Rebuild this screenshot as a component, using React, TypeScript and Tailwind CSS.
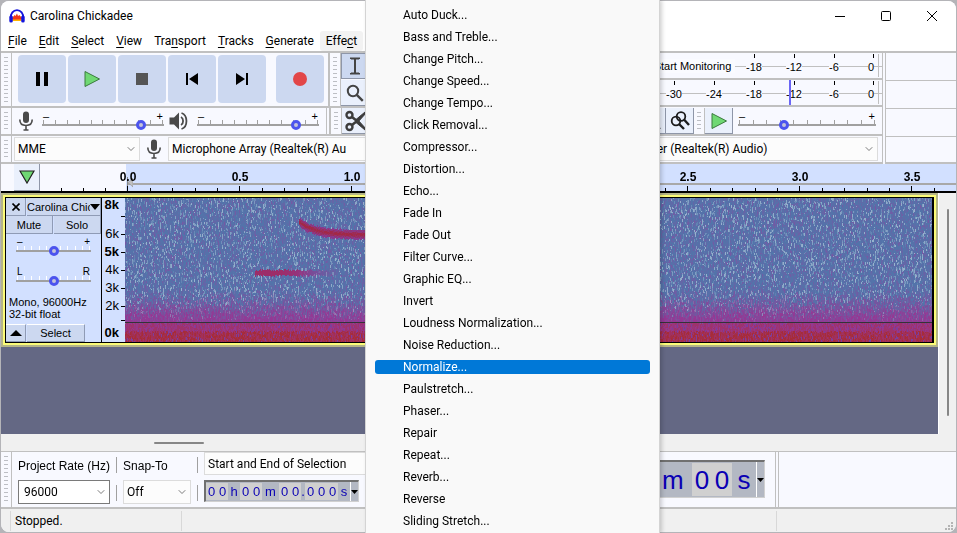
import { useEffect, useRef, useState } from "react";
import type { ReactNode } from "react";
import clsx from "clsx";
import { ChevronDown } from "lucide-react";

const MENUS = [
  { label: "File", key: 0 },
  { label: "Edit", key: 0 },
  { label: "Select", key: 0 },
  { label: "View", key: 0 },
  { label: "Transport", key: 3 },
  { label: "Tracks", key: 0 },
  { label: "Generate", key: 0 },
  { label: "Effect", key: 4 },
];

const EFFECTS = [
  "Auto Duck...",
  "Bass and Treble...",
  "Change Pitch...",
  "Change Speed...",
  "Change Tempo...",
  "Click Removal...",
  "Compressor...",
  "Distortion...",
  "Echo...",
  "Fade In",
  "Fade Out",
  "Filter Curve...",
  "Graphic EQ...",
  "Invert",
  "Loudness Normalization...",
  "Noise Reduction...",
  "Normalize...",
  "Paulstretch...",
  "Phaser...",
  "Repair",
  "Repeat...",
  "Reverb...",
  "Reverse",
  "Sliding Stretch...",
];

const SECONDS = ["0.0", "0.5", "1.0", "1.5", "2.0", "2.5", "3.0", "3.5"];

function MicIcon() {
  return (
    <svg className="h-5 w-4 shrink-0" viewBox="0 0 16 20" fill="none" stroke="#4a4a4a" strokeWidth="1.6">
      <rect x="5" y="0.5" width="6" height="11.5" rx="3" fill="#4a4a4a" stroke="none" />
      <path d="M1.8 8.5c0 3.8 2.6 6 6.2 6s6.200-2.200 6.200-6M8 14.500V19M5.500 19h5" />
    </svg>
  );
}

function SpeakerIcon() {
  return (
    <svg className="h-5 w-5 shrink-0" viewBox="0 0 20 20" fill="none" stroke="#4a4a4a" strokeWidth="1.800">
      <path d="M0.500 6.500h4.500l5-5v17l-5-5H0.500z" fill="#4a4a4a" stroke="none" />
      <path d="M12 6c2.800 1.600 2.800 6.400 0 8M12.500 2c6.600 2.200 6.600 13.800 0 16" />
    </svg>
  );
}

function PlayIcon({ className }: { className?: string }) {
  return (
    <svg className={className} viewBox="0 0 18 18">
      <path d="M2 1.500L16.500 9 2 16.500z" fill="#6fd873" stroke="#3a7a3d" strokeWidth="1" />
    </svg>
  );
}

function Grabber() {
  return (
    <div className="flex w-[11px] shrink-0 justify-center border-r border-[#c0c0c0] py-1">
      <div className="w-1 bg-[repeating-linear-gradient(#bcbec4_0_1px,transparent_1px_4px)]" />
    </div>
  );
}

interface SliderProps {
  label: string;
  value: number;
  ticks?: number;
  marks?: [string, string];
  className?: string;
  small?: boolean;
}

function Slider({ label, value, ticks = 11, marks = ["–", "+"], className, small }: SliderProps) {
  const [level, setLevel] = useState(value);
  return (
    <div className={clsx("flex shrink-0 flex-col", className)}>
      <div className={clsx("flex justify-between px-px font-['Liberation_Sans'] leading-[8px] text-black", small ? "text-[10px]" : "text-[11px]")}>
        <span>{marks[0]}</span>
        <span>{marks[1]}</span>
      </div>
      <div className="relative">
        <div className="absolute inset-x-px top-0 flex h-1 justify-between">
          {Array.from({ length: ticks }, (_, i) => (
            <span key={i} className={clsx("w-px", small ? "bg-white" : "bg-[#a0a0a0]")} />
          ))}
        </div>
        <input
          type="range"
          aria-label={label}
          value={level}
          onChange={(e) => setLevel(Number(e.target.value))}
          className="relative block h-[10px] w-full appearance-none bg-transparent bg-[linear-gradient(#a0a0a0,#a0a0a0)] bg-[length:100%_2px] bg-[position:0_4px] bg-no-repeat [&::-webkit-slider-thumb]:h-[10px] [&::-webkit-slider-thumb]:w-[10px] [&::-webkit-slider-thumb]:appearance-none [&::-webkit-slider-thumb]:rounded-full [&::-webkit-slider-thumb]:border-[3px] [&::-webkit-slider-thumb]:border-[#4c54ee] [&::-webkit-slider-thumb]:bg-[#c4c4d8]"
        />
      </div>
    </div>
  );
}

interface PickerProps {
  label: string;
  value: string;
  className?: string;
}

function Picker({ label, value, className }: PickerProps) {
  return (
    <div className={clsx("relative shrink-0", className)}>
      <select
        aria-label={label}
        className="h-full w-full appearance-none border border-[#dcdcdc] bg-[#fcfcfc] pr-5 pl-[3px] text-black"
      >
        <option>{value}</option>
      </select>
      <ChevronDown className="pointer-events-none absolute top-1/2 right-[3px] h-3 w-3 -translate-y-1/2 text-[#505050]" strokeWidth={1.5} />
    </div>
  );
}

function ToolButton({ label, active, children }: { label: string; active?: boolean; children: ReactNode }) {
  return (
    <button
      aria-label={label}
      className={clsx(
        "flex h-[26px] w-7 shrink-0 items-center justify-center border-r border-b border-[#8e96a8]",
        active ? "border-t border-l bg-[#ccd8f0]" : "bg-[#eaf0fc]"
      )}
    >
      {children}
    </button>
  );
}

function TransportButton({ label, children }: { label: string; children: ReactNode }) {
  return (
    <button aria-label={label} className="flex h-12 w-12 items-center justify-center rounded-[4px] bg-[#ccd8f0]">
      {children}
    </button>
  );
}

function Meter({ note, level }: { note?: string; level?: boolean }) {
  const marks = note ? ["-18", "-12", "-6"] : ["-30", "-24", "-18", "-12", "-6"];
  return (
    <div className="relative flex h-[27px] border-b-2 border-[#c0c0c0] font-['Liberation_Sans'] text-[11px] leading-[14px] text-black">
      <div className="absolute inset-x-0 top-[13px] h-px bg-[#c0c0c0]" />
      <div className="flex flex-1 justify-end">
        {note && (
          <div className="relative flex w-[83px] items-end justify-center pb-[5px]">
            <span className="bg-[#fafbff] px-1 whitespace-nowrap">{note}</span>
          </div>
        )}
        {marks.map((m) => (
          <div key={m} className="relative flex w-10 flex-col items-center gap-[2px] pt-px">
            <span className="h-1 w-px bg-black" />
            <span className="bg-[#f8f9ff]">{m}</span>
          </div>
        ))}
        <div className="relative flex w-5 flex-col items-end gap-[2px] pt-px">
          <span className="h-1 w-px bg-black" />
          <span className="bg-[#f8f9ff]">0</span>
        </div>
      </div>
      <div className="relative my-px ml-1 w-1 border-l border-[#c0c0c0]" />
      {level && <div className="absolute inset-y-0 right-[91px] w-[2px] bg-[#6b66f5]" />}
    </div>
  );
}

// small repeatable generator so the noise looks the same on every paint
function makeRandom(seed: number) {
  let s = seed;
  return () => {
    s = (s * 1664525 + 1013904223) >>> 0;
    return s / 4294967296;
  };
}

function mix(a: number[], b: number[], t: number) {
  const k = Math.max(0, Math.min(1, t));
  return a.map((v, i) => v + (b[i] - v) * k);
}

function Spectrogram() {
  const ref = useRef<HTMLCanvasElement>(null);

  useEffect(() => {
    const canvas = ref.current;
    const ctx = canvas?.getContext("2d");
    if (!canvas || !ctx) return;
    const w = canvas.clientWidth;
    const h = canvas.clientHeight;
    canvas.width = w;
    canvas.height = h;
    const random = makeRandom(7);
    const blue = [82, 116, 170];
    const pale = [165, 190, 212];
    const violet = [118, 88, 164];
    const purple = [148, 56, 148];
    const magenta = [158, 50, 108];
    const red = [166, 44, 56];

    for (let x = 0; x < w; x++) {
      let y = 0;
      while (y < h) {
        const len = 1 + Math.floor(random() * 3);
        const f = y / h;
        const n = random();
        let c = mix(blue, violet, random() * random() * 0.8);
        if (n > 0.76) c = mix(blue, pale, random() * 0.85);
        else if (n < 0.1) c = mix(blue, violet, 0.4 + random() * 0.6);
        if (f > 0.62) c = mix(c, purple, (f - 0.67) * 5.2 + (random() - 0.5) * 0.7);
        if (f > 0.86) c = mix(purple, magenta, random() * 1.4);
        if (f > 0.92) c = mix(magenta, red, random() * 1.2);
        if (f > 0.86 && n > 0.93) c = [124, 62, 156];

        // the falling note fades in from violet, the flat one trails off
        const fall = 24 + 13 * (1 - Math.exp(-(x - 174) / 16));
        if (x > 173 && x < 262) {
          const d = Math.abs(y + len / 2 - fall);
          if (d < 4.5) c = mix([162, 40, 70], [136, 58, 144], d / 3.5 - 0.15);
        }
        if (x > 129 && x < 212) {
          const d = Math.abs(y + len / 2 - 75);
          const fade = x < 155 ? 1 : 1 - (x - 155) / 58;
          if (d < 2.8) c = mix(c, mix([140, 56, 146], [158, 44, 100], fade * 1.4 - 0.5), fade * 1.4);
        }
        ctx.fillStyle = `rgb(${c.map(Math.round).join(",")})`;
        ctx.fillRect(x, y, 1, len);
        y += len;
      }
    }
    ctx.fillStyle = "#333338";
    ctx.fillRect(0, Math.round(h * 0.863), w, 1);
  }, []);

  return <canvas ref={ref} className="block h-full w-full" />;
}

const SCALE = [
  { label: "8k", bold: true, tick: false, size: "h-[14px]" },
  { label: "", bold: false, tick: true, size: "h-2 mb-[5px]" },
  { label: "6k", bold: false, tick: true, size: "h-[18px]" },
  { label: "5k", bold: true, tick: true, size: "h-[18px]" },
  { label: "4k", bold: false, tick: true, size: "h-[18px]" },
  { label: "3k", bold: false, tick: true, size: "h-[18px]" },
  { label: "2k", bold: false, tick: true, size: "h-[18px]" },
  { label: "", bold: false, tick: true, size: "h-[11px]" },
  { label: "0k", bold: true, tick: false, size: "h-[14px]" },
];

const TRACK_BUTTON = "flex items-center justify-center bg-[#ccd8f0] border-r border-b border-[#8f9bb5]";

function Track() {
  return (
    <div className="border-2 border-[#b4b488]">
      <div className="border-2 border-[#fbfb78]">
        <div className="flex h-[146px] border border-black border-r-2 bg-black font-['Liberation_Sans'] text-[11px] text-black">
          <div className="flex w-24 shrink-0 flex-col border-r border-black bg-[#d2e0ff]">
            <div className="flex h-[18px] gap-px">
              <button aria-label="Close track" className={clsx(TRACK_BUTTON, "w-5")}>
                <svg className="h-2 w-2" viewBox="0 0 8 8" stroke="#000" strokeWidth="1.600">
                  <path d="M0.500 0.500l7 7M7.500 0.500l-7 7" />
                </svg>
              </button>
              <button className={clsx(TRACK_BUTTON, "min-w-0 flex-1")}>
                <span className="overflow-hidden whitespace-nowrap">Carolina Chic</span>
                <svg className="h-[6px] w-[10px] shrink-0" viewBox="0 0 10 6">
                  <path d="M0 0h10L5 6z" />
                </svg>
              </button>
            </div>
            <div className="flex h-[18px] gap-px">
              <button className={clsx(TRACK_BUTTON, "flex-1")}>Mute</button>
              <button className={clsx(TRACK_BUTTON, "flex-1")}>Solo</button>
            </div>
            <Slider label="Gain" value={50} small className="mx-[10px] mt-1" />
            <Slider label="Pan" value={50} small marks={["L", "R"]} className="mx-[10px] mt-3" />
            <div className="mt-[10px] pl-[3px] leading-3 whitespace-nowrap">
              Mono, 96000Hz
              <br />
              32-bit float
            </div>
            <div className="mt-auto flex h-[18px] gap-px">
              <button aria-label="Collapse" className={clsx(TRACK_BUTTON, "w-5 border-t border-t-white")}>
                <svg className="h-[6px] w-3" viewBox="0 0 12 6">
                  <path d="M0 6h12L6 0z" />
                </svg>
              </button>
              <button className={clsx(TRACK_BUTTON, "w-[58px] border-t border-t-white")}>Select</button>
            </div>
          </div>
          <div className="flex w-[23px] shrink-0 flex-col bg-[#d2e0ff] text-[13px]">
            {SCALE.map((s, i) => (
              <div key={i} className={clsx("flex items-center justify-end gap-[2px]", s.size)}>
                <span className={clsx(s.bold && "font-bold")}>{s.label}</span>
                <span className={clsx("h-px w-1", s.tick && "bg-black")} />
              </div>
            ))}
          </div>
          <div className="min-w-0 flex-1">
            <Spectrogram />
          </div>
        </div>
      </div>
    </div>
  );
}

function TimeText({ parts, big }: { parts: string[]; big?: boolean }) {
  const unitClass = (part: string) => {
    if (part === ".") return "w-1 justify-center";
    if (big) return part === "s" ? "w-6 justify-center" : "w-[34px] pl-1";
    return part === "m" ? "w-[17px] justify-center" : "w-3 justify-center";
  };
  return (
    <div
      className={clsx(
        "flex shrink-0 border border-t-2 border-[#d0d0d0] border-t-[#707070] bg-[#b3b8c3] font-['Liberation_Sans'] text-[#0a00b4]",
        big ? "h-[38px] text-[26px]" : "h-[22px] border-l-2 border-l-[#707070] text-[13px]"
      )}
    >
      {parts.map((part, i) =>
        /\d/.test(part) ? (
          <span key={i} className="my-px flex items-center bg-[#d0d0d0]">
            {part.split("").map((d, k) => (
              <span key={k} className={clsx("text-center", big ? "w-5" : "w-[11px]")}>
                {d}
              </span>
            ))}
          </span>
        ) : (
          <span key={i} className={clsx("flex items-center", unitClass(part))}>
            {part}
          </span>
        )
      )}
      <button aria-label="Time format" className="flex w-2 items-center border-l border-white">
        <svg className="h-1 w-[7px]" viewBox="0 0 7 4">
          <path d="M0 0h7L3.500 4z" />
        </svg>
      </button>
    </div>
  );
}

function EffectMenu() {
  return (
    <div
      role="menu"
      className="absolute inset-y-0 left-[365px] w-[295px] border-x border-[#d4d4d4] bg-[#f9f9f9] px-[9px] pt-1 shadow-[2px_0_4px_rgba(0,0,0,0.18)]"
    >
      {EFFECTS.map((name) => (
        <div key={name} className="flex h-[22px] items-center">
          <button
            role="menuitem"
            className={clsx(
              "h-[14px] w-full rounded-[3px] pl-7 text-left leading-[14px]",
              name === "Normalize..." ? "bg-[#0078d7] text-white" : "text-black"
            )}
          >
            {name}
          </button>
        </div>
      ))}
    </div>
  );
}

export default function App() {
  return (
    <div className="relative flex h-screen flex-col overflow-hidden bg-[#b4b4b8] p-px font-['Roboto','Open_Sans',sans-serif] text-[12px] leading-4 text-black">
      <div className="flex min-h-0 flex-1 flex-col overflow-hidden rounded-[8px] bg-[#f8f9ff]">
        {/* Title bar */}
        <div className="flex h-[30px] shrink-0 items-center bg-white pl-2">
          <svg className="h-[14px] w-4" viewBox="0 0 16 14">
            <path d="M3.500 7.500h9V12h-9z" fill="#ffb400" />
            <path d="M3 9.500l1.500-2 1-1.500 1 1L8 4.500l1 2.500 1.500-1 1 1.500L13 9.500l-1.500 1h-7z" fill="#f0381c" />
            <path d="M1.800 9C1.500 4.500 4.200 1.200 8 1.200S14.500 4.500 14.200 9" fill="none" stroke="#1414dc" strokeWidth="1.800" />
            <rect x="0.300" y="6.500" width="3.500" height="7" rx="1.500" fill="#1414dc" />
            <rect x="12.200" y="6.500" width="3.500" height="7" rx="1.500" fill="#1414dc" />
          </svg>
          <h1 className="flex-1 pl-[5px]">Carolina Chickadee</h1>
          <div className="flex gap-[34px] pr-[18px]">
            <button aria-label="Minimize">
              <svg className="h-3 w-3" viewBox="0 0 12 12" stroke="#000">
                <path d="M1 6.500h10" />
              </svg>
            </button>
            <button aria-label="Maximize">
              <svg className="h-3 w-3" viewBox="0 0 12 12" fill="none" stroke="#000">
                <rect x="1.500" y="1.500" width="9" height="9" rx="1" />
              </svg>
            </button>
            <button aria-label="Close">
              <svg className="h-3 w-3" viewBox="0 0 12 12" stroke="#000">
                <path d="M1 1l10 10M11 1L1 11" />
              </svg>
            </button>
          </div>
        </div>

        {/* Menu bar */}
        <div className="flex h-[22px] shrink-0 border-b-2 border-[#c0c0c0] bg-white pl-px">
          {MENUS.map(({ label, key }) => (
            <button key={label} className={clsx("px-[6px]", label === "Effect" && "rounded-[3px] bg-[#f2f2f2]")}>
              {label.slice(0, key)}
              <span className="underline underline-offset-2">{label[key]}</span>
              {label.slice(key + 1)}
            </button>
          ))}
        </div>

        {/* Toolbars */}
        <div className="flex shrink-0">
          <div className="min-w-0 flex-1">
            <div className="flex h-[55px]">
              <div className="flex shrink-0 border-b-2 border-[#c0c0c0]">
                <Grabber />
                <div className="flex gap-[2px] border-r-2 border-[#c0c0c0] py-[2px] pr-1 pl-[6px]">
                  <TransportButton label="Pause">
                    <svg className="h-4 w-4" viewBox="0 0 16 16">
                      <path d="M2 1h4v14H2zM10 1h4v14h-4z" />
                    </svg>
                  </TransportButton>
                  <TransportButton label="Play">
                    <PlayIcon className="h-[18px] w-[18px]" />
                  </TransportButton>
                  <TransportButton label="Stop">
                    <span className="h-3 w-3 bg-[#555]" />
                  </TransportButton>
                  <TransportButton label="Skip to Start">
                    <svg className="h-[14px] w-[14px]" viewBox="0 0 14 14">
                      <path d="M1 1h2v12H1zM13 1v12L4 7z" />
                    </svg>
                  </TransportButton>
                  <TransportButton label="Skip to End">
                    <svg className="h-[14px] w-[14px]" viewBox="0 0 14 14">
                      <path d="M11 1h2v12h-2zM1 1v12l9-6z" />
                    </svg>
                  </TransportButton>
                  <div className="ml-2">
                    <TransportButton label="Record">
                      <span className="h-[14px] w-[14px] rounded-full bg-[#e24648]" />
                    </TransportButton>
                  </div>
                </div>
                <Grabber />
                <div className="flex w-7 flex-col gap-px">
                  <ToolButton label="Selection Tool" active>
                    <svg className="h-[18px] w-3" viewBox="0 0 12 18" fill="none" stroke="#444" strokeWidth="2">
                      <path d="M2 2V1.500h8V2M2 16v0.500h8V16M6 1.500v15" />
                    </svg>
                  </ToolButton>
                  <ToolButton label="Zoom Tool">
                    <svg className="h-[18px] w-[18px]" viewBox="0 0 18 18" fill="none" stroke="#444" strokeWidth="2">
                      <circle cx="7" cy="7" r="5.200" />
                      <path d="M10.800 10.800l6 6" strokeWidth="2.400" />
                    </svg>
                  </ToolButton>
                </div>
              </div>
              <div className="min-w-0 flex-1">
                <Meter note="Start Monitoring" />
                <div className="h-7">
                  <Meter level />
                </div>
              </div>
            </div>

            <div className="flex h-7 border-b-2 border-[#c0c0c0]">
              <Grabber />
              <div className="flex items-center border-r border-[#c0c0c0] pl-[6px]">
                <MicIcon />
                <Slider label="Recording Volume" value={84} className="ml-2 w-[122px]" />
                <div className="ml-[5px] flex">
                  <SpeakerIcon />
                </div>
                <Slider label="Playback Volume" value={84} className="mr-[7px] ml-2 w-[122px]" />
              </div>
              <div className="w-1 border-r-2 border-[#c0c0c0]" />
              <Grabber />
              <ToolButton label="Cut">
                <svg className="h-[22px] w-[22px]" viewBox="0 0 22 22" fill="none" stroke="#3c3c3c" strokeWidth="2.400">
                  <circle cx="4.500" cy="5" r="3" />
                  <circle cx="4.500" cy="17" r="3" />
                  <path d="M7 7l5 4M7 15l5-4" strokeWidth="2.600" />
                  <path d="M11 9.500L20 2h2l-9 10zM11 12.500l9 7.500h2l-9-10z" fill="#3c3c3c" strokeWidth="1" />
                </svg>
              </ToolButton>
              <div className="flex flex-1 items-center justify-end">
                <ToolButton label="Fit Project">
                  <svg className="h-5 w-5" viewBox="0 0 20 20" fill="none" stroke="#222" strokeWidth="2">
                    <circle cx="8" cy="8" r="5" />
                    <path d="M12 12l6 6" />
                  </svg>
                </ToolButton>
                <ToolButton label="Zoom Toggle">
                  <svg className="h-5 w-5" viewBox="0 0 20 20" fill="none" stroke="#1c1c1c" strokeWidth="1.800">
                    <circle cx="11" cy="5.500" r="4.300" />
                    <circle cx="6" cy="10" r="4.300" />
                    <path d="M14 8.500l5 5.500M9 13l5 5" strokeWidth="2.400" />
                  </svg>
                </ToolButton>
                <div className="flex self-stretch">
                  <Grabber />
                </div>
                <ToolButton label="Play-at-Speed">
                  <PlayIcon className="h-[18px] w-[18px]" />
                </ToolButton>
                <Slider label="Playback Speed" value={32} className="mr-[6px] ml-[5px] w-[138px]" />
              </div>
            </div>

            <div className="flex h-7 border-b-2 border-[#c0c0c0]">
              <Grabber />
              <div className="flex min-w-0 flex-1 items-center pr-1 pl-[2px]">
                <Picker label="Audio Host" value="MME" className="h-6 w-[126px]" />
                <div className="mx-[6px] flex">
                  <MicIcon />
                </div>
                <Picker label="Recording Device" value="Microphone Array (Realtek(R) Au" className="h-6 w-[220px]" />
                <Picker label="Playback Device" value="Speaker (Realtek(R) Audio)" className="ml-auto h-6 w-[258px]" />
              </div>
            </div>
          </div>
          <div className="w-1 border-x border-[#c0c0c0]" />
          <div className="flex w-[70px] flex-col">
            <div className="h-7 border-b border-[#c0c0c0]" />
            <div className="h-7 border-b border-[#c0c0c0]" />
            <div className="h-7 border-b border-[#c0c0c0]" />
            <div className="flex-1 border-b-2 border-[#c0c0c0]" />
          </div>
        </div>

        {/* Timeline */}
        <div className="flex h-[29px] shrink-0 overflow-hidden border-b-2 border-black">
          <div className="w-[13px] shrink-0" />
          <button
            aria-label="Pinned Play Head"
            className="flex w-[26px] shrink-0 items-center justify-center border-r border-b border-[#8e96a8] bg-[#eaf0fc]"
          >
            <svg className="h-[14px] w-4" viewBox="0 0 16 14">
              <path d="M1 1h14L8 13z" fill="#6fd873" stroke="#222" strokeWidth="1.200" />
            </svg>
          </button>
          <div className="relative flex min-w-0 flex-1 overflow-hidden bg-[linear-gradient(90deg,#f8f9ff_86px,#d2e0ff_86px)] pl-[10px] font-['Liberation_Sans'] text-[12px] font-bold">
            <div className="absolute right-0 bottom-[6px] left-[88px] h-[2px] bg-[#a8a8a8]" />
            <svg className="absolute bottom-0 left-[87px] h-[14px] w-[6px]" viewBox="0 0 6 14">
              <path d="M6 1v9L1 5.500z" fill="#c0c0c0" stroke="#888" strokeWidth="0.500" />
              <path d="M0.500 0v14" stroke="#888" />
            </svg>
            <div className="flex w-[22px] shrink-0 items-end justify-center">
              <span className="h-[3px] w-px bg-black" />
            </div>
            {SECONDS.map((s) => (
              <div key={s} className="relative flex w-28 shrink-0 flex-col justify-between pt-[5px]">
                <span className="text-center">{s}</span>
                <div className="grid grid-cols-5 items-end justify-items-center">
                  <span className="h-[3px] w-px bg-black" />
                  <span className="h-[3px] w-px bg-black" />
                  <span className="h-[5px] w-px bg-black" />
                  <span className="h-[3px] w-px bg-black" />
                  <span className="h-[3px] w-px bg-black" />
                </div>
              </div>
            ))}
          </div>
        </div>

        {/* Tracks */}
        <div className="flex min-h-0 flex-1 bg-[#f0f0f0]">
          <div className="min-w-0 flex-1 bg-[#646884]">
            <Track />
          </div>
          <div className="flex w-[18px] justify-center border-l border-white pt-4 pb-[18px]">
            <div className="w-[2px] rounded-full bg-[#868686]" />
          </div>
        </div>
        <div className="flex h-[17px] shrink-0 items-center bg-[#f0f0f0] pl-[153px]">
          <div className="h-[2px] w-[50px] rounded-full bg-[#868686]" />
        </div>

        {/* Selection toolbar */}
        <div className="flex h-14 shrink-0 border-t border-[#c0c0c0]">
          <Grabber />
          <div className="flex flex-1 items-start pl-[6px]">
            <div className="flex flex-col">
              <label htmlFor="rate" className="flex h-7 items-center font-['Liberation_Sans']">
                Project Rate (Hz)
              </label>
              <div className="relative h-6 w-[92px]">
                <input id="rate" defaultValue="96000" className="h-full w-full border border-[#7a7a7a] bg-white pl-[5px] text-[12px]" />
                <ChevronDown className="pointer-events-none absolute top-[6px] right-[3px] h-3 w-3 text-[#505050]" strokeWidth={1.5} />
              </div>
            </div>
            <div className="mx-[6px] flex flex-col gap-3 pt-[5px]">
              <span className="h-4 w-px bg-[#a0a0a0]" />
              <span className="h-4 w-px bg-[#a0a0a0]" />
            </div>
            <div className="flex flex-col">
              <span className="flex h-7 items-center font-['Liberation_Sans']">Snap-To</span>
              <Picker label="Snap-To" value="Off" className="h-6 w-[68px]" />
            </div>
            <div className="mx-[6px] flex flex-col gap-3 pt-[5px]">
              <span className="h-4 w-px bg-[#a0a0a0]" />
              <span className="h-4 w-px bg-[#a0a0a0]" />
            </div>
            <div className="flex flex-col items-start gap-[5px]">
              <Picker label="Selection Type" value="Start and End of Selection" className="h-[23px] w-[200px]" />
              <TimeText parts={["00", "h", "00", "m", "00", ".", "000", "s"]} />
            </div>
          </div>
          <div className="flex items-start pt-2 pr-[10px]">
            <TimeText big parts={["00", "h", "00", "m", "00", "s"]} />
          </div>
          <div className="w-1 border-x border-[#c0c0c0]" />
          <div className="w-[177px]" />
        </div>

        {/* Status bar */}
        <div className="flex h-[25px] shrink-0 items-center border-t-2 border-[#c0c0c0] bg-[#f0f0f0]">
          <div className="ml-[9px] flex h-5 w-[171px] items-center border-l border-[#d8d8d8] pl-1">Stopped.</div>
          <div className="h-5 flex-1 border-l border-[#d8d8d8]" />
          <div className="flex h-5 w-[180px] items-end justify-end border-l border-[#d8d8d8] pr-[2px]">
            <svg className="h-[9px] w-[9px]" viewBox="0 0 9 9" fill="#b4b4b4">
              <path d="M6 0h2v2H6zM3 3h2v2H3zM6 3h2v2H6zM0 6h2v2H0zM3 6h2v2H3zM6 6h2v2H6z" />
            </svg>
          </div>
        </div>
      </div>

      <EffectMenu />
    </div>
  );
}
